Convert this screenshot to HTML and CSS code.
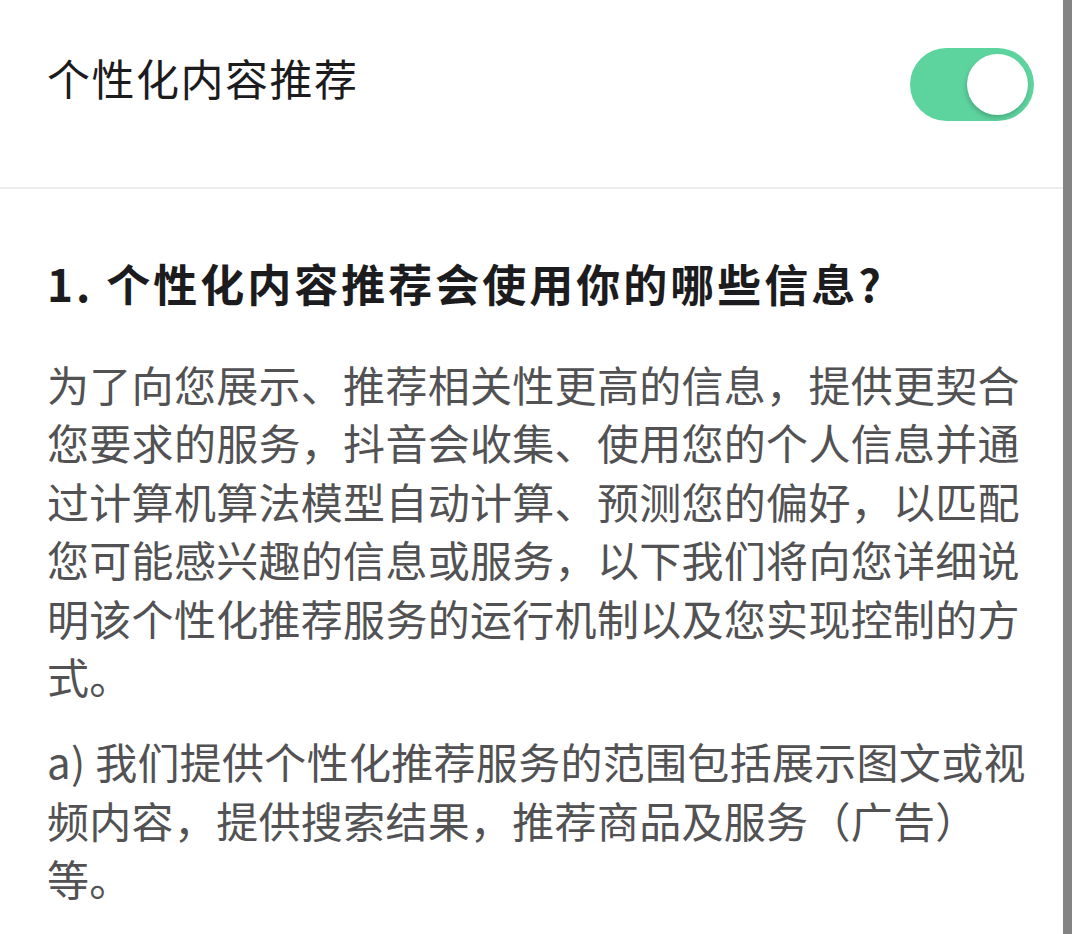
FILE: index.html
```html
<!DOCTYPE html>
<html lang="zh-CN">
<head>
    <meta charset="UTF-8">
    <meta name="viewport" content="width=device-width, initial-scale=1.0">
    <title>个性化内容推荐</title>
    <link rel="stylesheet" href="styles.css">
</head>
<body>
    <div id="page">
        <div class="setting">
            <span class="setting-title">个性化内容推荐</span>
            <div class="switch on">
                <div class="knob"></div>
            </div>
        </div>

        <div class="article">
            <h2>1. 个性化内容推荐会使用你的哪些信息?</h2>
            <p>为了向您展示、推荐相关性更高的信息，提供更契合您要求的服务，抖音会收集、使用您的个人信息并通过计算机算法模型自动计算、预测您的偏好，以匹配您可能感兴趣的信息或服务，以下我们将向您详细说明该个性化推荐服务的运行机制以及您实现控制的方式。</p>
            <p>a) 我们提供个性化推荐服务的范围包括展示图文或视频内容，提供搜索结果，推荐商品及服务（广告）等。</p>
        </div>
    </div>
    <div class="scrollbar"></div>
</body>
</html>
```

FILE: styles.css
```css
*{
    padding: 0;
    margin: 0;
    box-sizing: border-box;
}
body{
    height: 100vh;
    background-color: #fff;
    display: flex;
    font-family: "Noto Sans CJK SC", "Noto Sans", sans-serif;
    overflow: hidden;
}
#page{
    width: 1063px;
    flex-shrink: 0;
}
.scrollbar{
    width: 9px;
    height: 100%;
    background-color: #838383;
}
.setting{
    height: 189px;
    padding: 46px 29px 0 47px;
    display: flex;
    justify-content: space-between;
    align-items: flex-start;
    border-bottom: 2px solid #ededed;
}
.setting-title{
    font-size: 43px;
    line-height: 62px;
    letter-spacing: 1.5px;
    color: #1c1c1e;
}
.switch{
    margin-top: 2px;
    width: 124px;
    height: 73px;
    border-radius: 37px;
    background-color: #5dd39e;
    padding: 6px;
    display: flex;
    justify-content: flex-end;
}
.knob{
    width: 61px;
    height: 61px;
    border-radius: 50%;
    background-color: #fff;
    box-shadow: -1px 3px 4px rgba(0, 0, 0, 0.18);
}
.article{
    padding: 64px 26px 0 47px;
}
.article h2{
    font-size: 44px;
    line-height: 60px;
    font-weight: 700;
    letter-spacing: 3px;
    color: #1c1c1e;
    margin-bottom: 42px;
}
.article p{
    font-size: 42px;
    line-height: 58.4px;
    letter-spacing: 0.3px;
    color: #525254;
    margin-bottom: 27px;
}
```
